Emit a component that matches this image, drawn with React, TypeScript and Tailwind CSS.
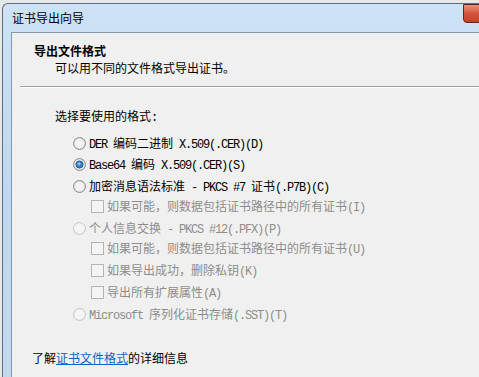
import type { ReactNode } from 'react';

const CJK = '"Noto Sans CJK SC", "Noto Sans", sans-serif';

// Split text so ASCII runs use a narrow mono face (half-width, like SimSun) and CJK runs the CJK font
function Mixed({ text }: { text: string }) {
  const parts = text.split(/([\x00-\x7f]+)/).filter((p) => p.length > 0);
  return (
    <>
      {parts.map((p, i) =>
        /^[\x00-\x7f]+$/.test(p) ? (
          <span key={i} className="whitespace-pre font-['Liberation_Mono',monospace] text-[12px] tracking-[-1.2px]">
            {p}
          </span>
        ) : (
          <span key={i} className="text-[12px]">
            {p}
          </span>
        )
      )}
    </>
  );
}

function Radio({ checked, disabled }: { checked?: boolean; disabled?: boolean }) {
  const ring = disabled ? '#c9c9c9' : '#8f9090';
  return (
    <svg width="13" height="13" viewBox="0 0 13 13" className="shrink-0">
      <circle cx="6.5" cy="6.5" r="6" fill={disabled ? '#eeeeee' : '#dedede'} stroke={ring} />
      <circle cx="6.5" cy="6.5" r="4.5" fill={disabled ? '#f5f5f5' : '#f3f3f3'} />
      {checked && (
        <>
          <circle cx="6.5" cy="6.5" r="3.6" fill="#2f7fc9" stroke="#1a4f82" strokeWidth="0.8" />
          <circle cx="6" cy="5.8" r="1.6" fill="#8cc4f2" />
        </>
      )}
    </svg>
  );
}

function Check({ disabled }: { disabled?: boolean }) {
  return (
    <span
      className={
        disabled
          ? 'box-border h-[13px] w-[13px] shrink-0 border border-[#b4b4b4] bg-[#f4f4f4]'
          : 'box-border h-[13px] w-[13px] shrink-0 border border-[#8e8f8f] bg-white'
      }
    />
  );
}

// Fixed-height row; the control + label sit in a 16px line near the top, so row heights equal the pitch
function Row({ h, indent, children }: { h: string; indent?: boolean; children: ReactNode }) {
  return (
    <div className={`${h} pt-[2px] ${indent ? 'pl-[18px]' : ''}`}>
      <div className="flex h-[16px] items-center">{children}</div>
    </div>
  );
}

export default function App() {
  return (
    <div className="relative h-[377px] w-[479px] overflow-hidden bg-[#e6e8ea]" style={{ fontFamily: CJK }}>
      <div className="ml-[2px] mt-[3px] flex h-[374px] flex-col rounded-tl-[6px] border-l border-t border-[#5f6e7e] bg-gradient-to-b from-[#cde2f5] via-[#bdd8f1] to-[#c3d9ee] pl-[8px]">
        {/* title bar */}
        <div className="flex h-[28px] items-center pl-[1px] text-[12px] leading-none text-black">证书导出向导</div>

        {/* content */}
        <div className="flex flex-1 flex-col border-l border-t border-[#8397ad] bg-[#f0f0f0] text-black">
          {/* header */}
          <div className="h-[53px] pl-[22px] pt-[10px]">
            <div className="text-[12px] font-bold leading-[16px]">导出文件格式</div>
            <div className="mt-[1px] pl-[21px] text-[12px] leading-[16px]">可以用不同的文件格式导出证书。</div>
          </div>
          <div className="ml-[8px] h-[2px] border-t border-b border-t-[#a0a0a0] border-b-white" />

          {/* body */}
          <div className="pl-[43px] pt-[18px]">
            <div className="leading-[16px]">
              <Mixed text="选择要使用的格式:" />
            </div>
            <div className="mt-[7px] pl-[18px] leading-[16px]">
              <Row h="h-[21px]">
                <Radio />
                <span className="ml-[3px]">
                  <Mixed text="DER 编码二进制 X.509(.CER)(D)" />
                </span>
              </Row>
              <Row h="h-[22px]">
                <Radio checked />
                <span className="ml-[3px]">
                  <Mixed text="Base64 编码 X.509(.CER)(S)" />
                </span>
              </Row>
              <Row h="h-[20px]">
                <Radio />
                <span className="ml-[3px]">
                  <Mixed text="加密消息语法标准 - PKCS #7 证书(.P7B)(C)" />
                </span>
              </Row>
              <Row h="h-[22px]" indent>
                <Check disabled />
                <span className="ml-[3px] text-[#8d8d8d]">
                  <Mixed text="如果可能，则数据包括证书路径中的所有证书(I)" />
                </span>
              </Row>
              <Row h="h-[20px]">
                <Radio disabled />
                <span className="ml-[3px] text-[#8d8d8d]">
                  <Mixed text="个人信息交换 - PKCS #12(.PFX)(P)" />
                </span>
              </Row>
              <Row h="h-[22px]" indent>
                <Check disabled />
                <span className="ml-[3px] text-[#8d8d8d]">
                  <Mixed text="如果可能，则数据包括证书路径中的所有证书(U)" />
                </span>
              </Row>
              <Row h="h-[22px]" indent>
                <Check disabled />
                <span className="ml-[3px] text-[#8d8d8d]">
                  <Mixed text="如果导出成功，删除私钥(K)" />
                </span>
              </Row>
              <Row h="h-[22px]" indent>
                <Check disabled />
                <span className="ml-[3px] text-[#8d8d8d]">
                  <Mixed text="导出所有扩展属性(A)" />
                </span>
              </Row>
              <Row h="h-[22px]">
                <Radio disabled />
                <span className="ml-[3px] text-[#8d8d8d]">
                  <Mixed text="Microsoft 序列化证书存储(.SST)(T)" />
                </span>
              </Row>
            </div>
          </div>

          {/* footer */}
          <div className="mt-auto pb-[11px] pl-[20px] text-[12px] leading-[16px]">
            了解<span className="text-[#0a64c8] underline">证书文件格式</span>的详细信息
          </div>
        </div>
      </div>

      {/* close button */}
      <div className="absolute left-[463px] top-[4px] h-[19px] w-[30px] rounded-bl-[4px] border border-[#5a2a22] bg-gradient-to-b from-[#e8917a] via-[#d2533a] to-[#c24428]" />
    </div>
  );
}
